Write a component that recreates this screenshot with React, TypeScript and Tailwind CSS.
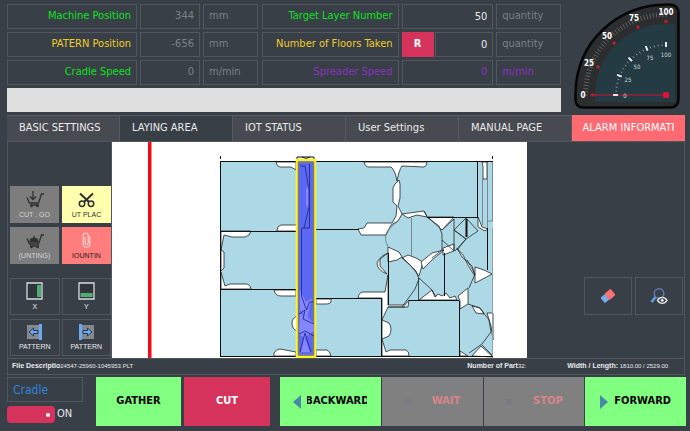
import { useState } from 'react';
import type { ReactNode } from 'react';

const tabs = ['BASIC SETTINGS', 'LAYING AREA', 'IOT STATUS', 'User Settings', 'MANUAL PAGE'];

const positions = [
  { label: 'Machine Position', value: '344', unit: 'mm', tone: 'text-[#0be31c]' },
  { label: 'PATERN Position', value: '-656', unit: 'mm', tone: 'text-[#f0cc28]' },
  { label: 'Cradle Speed', value: '0', unit: 'm/min', tone: 'text-[#0be31c]' }
];

const cell = 'flex items-center min-w-0 h-[25px] border border-[#52565d] px-[5px] whitespace-nowrap';

export default function App() {
  const [tab, setTab] = useState('LAYING AREA');

  return (
    <div className="min-h-screen bg-[#393f47] pl-[7px] pr-1 pt-1 font-['DejaVu_Sans_Condensed','DejaVu_Sans',sans-serif] text-[11px] text-[#e8eaec] flex flex-col">
      <header className="flex">
        <div className="flex-[554] min-w-0">
          <div className="grid grid-cols-[251fr_299fr] gap-1">
            <div className="grid gap-[3px]">
              {positions.map((row) => (
                <div key={row.label} className="grid grid-cols-[130fr_60fr_55fr] gap-[3px]">
                  <span className={`${cell} justify-end ${row.tone}`}>{row.label}</span>
                  <output className={`${cell} justify-end text-[#7d8187]`}>{row.value}</output>
                  <span className={`${cell} text-[#7d8187]`}>{row.unit}</span>
                </div>
              ))}
            </div>
            <div className="grid gap-[3px]">
              <div className="grid grid-cols-[137fr_92fr_65fr] gap-[3px]">
                <label htmlFor="target" className={`${cell} justify-end text-[#0be31c]`}>Target Layer Number</label>
                <input id="target" defaultValue="50" className={`${cell} w-full bg-transparent text-right`} />
                <span className={`${cell} text-[#7d8187]`}>quantity</span>
              </div>
              <div className="grid grid-cols-[137fr_92fr_65fr] gap-[3px]">
                <label htmlFor="taken" className={`${cell} justify-end text-[#f0cc28]`}>Number of Floors Taken</label>
                <div className="flex gap-px">
                  <button className="w-8 shrink-0 bg-[#d6335c] font-bold text-white">R</button>
                  <input id="taken" defaultValue="0" className={`${cell} w-full bg-transparent text-right`} />
                </div>
                <span className={`${cell} text-[#7d8187]`}>quantity</span>
              </div>
              <div className="grid grid-cols-[137fr_92fr_65fr] gap-[3px]">
                <span className={`${cell} justify-end text-[#8d2fc0]`}>Spreader Speed</span>
                <output className={`${cell} justify-end text-[#8d2fc0]`}>0</output>
                <span className={`${cell} text-[#8d2fc0]`}>m/min</span>
              </div>
            </div>
          </div>
          <div className="mt-[3px] h-6 bg-[#dfdfdf]" />
        </div>
        <div className="w-[125px] shrink-0 flex items-start justify-end pr-[5px]">
          <Gauge />
        </div>
      </header>

      <nav className="mt-[3px] grid grid-cols-6 h-[26px] mr-px">
        {tabs.map((name) => (
          <button
            key={name}
            onClick={() => setTab(name)}
            className={`border-r border-t border-[#555960] pl-3 text-left whitespace-nowrap overflow-hidden ${tab === name ? 'bg-[#393f47]' : 'bg-[#474a51]'}`}
          >
            {name}
          </button>
        ))}
        <button className="flex justify-center items-center bg-[#ff6a72] text-white whitespace-nowrap">ALARM INFORMATI</button>
      </nav>

      <main className="flex border-x border-t border-[#52565d] mr-px">
        <aside className="w-[104px] shrink-0 pt-11 pl-[2px] border-r border-[#52565d]">
          <div className="grid grid-cols-2 gap-x-[3px] gap-y-1">
            <ToolButton label="CUT . GO" tone="bg-[#7d7d7d] text-[#d5d5d5]"><CartIcon kind="down" /></ToolButton>
            <ToolButton label="UT PLAC" tone="bg-[#ffffae] text-[#333333]"><ScissorsIcon /></ToolButton>
            <ToolButton label="(UNTING)" tone="bg-[#7d7d7d] text-[#d5d5d5]"><CartIcon kind="up" /></ToolButton>
            <ToolButton label="IOUNTIN" tone="bg-[#ff7d7d] text-[#222222]"><ClipIcon /></ToolButton>
          </div>
          <div className="mt-[14px] grid grid-cols-2 gap-x-[2px] gap-y-1">
            <ToolButton label="X" tone="border border-[#52565d]">
              <svg width="17" height="18" viewBox="0 0 17 18"><path d="M1 1h15v16H1z" fill="#30353b" stroke="#d8dcdf" strokeWidth="1.3" /><path d="M11 3h4v12h-4z" fill="#4cae73" /></svg>
            </ToolButton>
            <ToolButton label="Y" tone="border border-[#52565d]">
              <svg width="17" height="18" viewBox="0 0 17 18"><path d="M1 1h15v16H1z" fill="#30353b" stroke="#d8dcdf" strokeWidth="1.3" /><path d="M2.5 11h12v4h-12z" fill="#4cae73" /></svg>
            </ToolButton>
            <ToolButton label="PATTERN" tone="border border-[#52565d]"><PatternIcon dir="left" /></ToolButton>
            <ToolButton label="PATTERN" tone="border border-[#52565d]"><PatternIcon dir="right" /></ToolButton>
          </div>
        </aside>
        <section className="flex-[415] min-w-0 bg-white">
          <MarkerPlan />
        </section>
        <aside className="flex-[157] min-w-0 flex flex-col">
          <div className="mt-[135px] ml-auto mr-px flex gap-[3px]">
            <button aria-label="Erase" className="w-12 h-[38px] flex items-center justify-center border border-[#52565d]">
              <svg width="14" height="14" viewBox="0 0 14 14">
                <g transform="rotate(-40 7 7)"><rect x="0" y="3.5" width="6" height="7" rx="1.2" fill="#73aef0" /><rect x="5.5" y="3" width="8" height="8" rx="1" fill="#fa7077" /></g>
              </svg>
            </button>
            <button aria-label="Preview" className="w-12 h-[38px] flex items-center justify-center border border-[#52565d]">
              <svg width="18" height="18" viewBox="0 0 18 18" fill="none">
                <circle cx="9" cy="6.5" r="4.8" stroke="#6178b8" strokeWidth="1.5" />
                <path d="M5.5 10 1.5 15" stroke="#64a0e6" strokeWidth="2.4" />
                <path d="M7.5 13.3c2.5-4 7-4 9.5 0-2.5 4-7 4-9.5 0z" fill="#393f47" stroke="#e5e5df" strokeWidth="1.3" />
                <circle cx="12.2" cy="13.3" r="1.5" fill="#e5e5df" />
              </svg>
            </button>
          </div>
        </aside>
      </main>

      <div className="mr-px grid grid-cols-[456fr_100fr_117fr] h-[17px] items-center border border-[#52565d] pl-1 font-['Liberation_Sans',sans-serif] text-[6px] whitespace-nowrap">
        <span><b className="text-[7px]">File Descriptio</b>24547-25960-1045953.PLT</span>
        <span><b className="text-[7px]">Number of Part</b>32:</span>
        <span><b className="text-[7px]">Width / Length:</b> 1810.00 / 2529.00</span>
      </div>

      <footer className="mt-[2px] mb-1 grid grid-cols-[76fr_98fr_89fr_416fr] h-[49px]">
        <div className="flex flex-col justify-between">
          <span className="flex h-[25px] items-center border border-[#52565d] px-[5px] text-xs text-[#2d86dc]">Cradle</span>
          <label className="mb-[3px] flex items-center gap-[2px]">
            <input type="checkbox" role="switch" defaultChecked className="peer sr-only" />
            <span className="flex h-[17px] w-12 items-center rounded bg-[#9a3a53] px-[5px] peer-checked:justify-end peer-checked:bg-[#d6335c]">
              <span className="size-1 rounded-full bg-white" />
            </span>
            ON
          </label>
        </div>
        <button className="ml-[13px] bg-[#80ff80] font-bold text-black">GATHER</button>
        <button className="ml-[3px] bg-[#d6335c] font-bold text-white">CUT</button>
        <div className="ml-[10px] grid grid-cols-4 gap-px font-bold text-black">
          <button className="flex items-center justify-center gap-[6px] bg-[#80ff80]">
            <Arrow dir="left" />
            <span className="flex w-[60px] justify-center overflow-hidden"><span>BACKWARD</span></span>
          </button>
          <button className="flex items-center justify-center gap-5 bg-[#808080] text-[#d8868c]">
            <Square />WAIT
          </button>
          <button className="flex items-center justify-center gap-5 bg-[#808080] text-[#d8868c]">
            <Square />STOP
          </button>
          <button className="flex items-center justify-center gap-[6px] bg-[#80ff80]">
            <Arrow dir="right" />FORWARD
          </button>
        </div>
      </footer>
    </div>
  );
}

interface ToolButtonProps {
  label: string;
  tone: string;
  children: ReactNode;
}

function ToolButton({ label, tone, children }: ToolButtonProps) {
  return (
    <button className={`flex h-[37px] min-w-0 flex-col items-center justify-center gap-[2px] font-['Liberation_Sans',sans-serif] text-[7px] leading-[9px] whitespace-nowrap ${tone}`}>
      {children}
      <span>{label}</span>
    </button>
  );
}

function Arrow({ dir }: { dir: 'left' | 'right' }) {
  return (
    <svg width="8" height="14" viewBox="0 0 8 14">
      <path d={dir === 'left' ? 'M8 0v14L0 7z' : 'M0 0v14l8-7z'} fill="#458ba9" />
    </svg>
  );
}

function Square() {
  return (
    <svg width="8" height="8" viewBox="0 0 8 8">
      <path d="M1 1h6v6H1z" fill="#7b7b86" />
    </svg>
  );
}

function CartIcon({ kind }: { kind: 'down' | 'up' }) {
  return (
    <svg width="18" height="17" viewBox="0 0 18 17" fill="none" stroke="#303030" strokeWidth="1.3">
      <path d="M1 6.5 3.5 12h9L15.500 3H18M4 14h9" />
      <circle cx="5.5" cy="15" r="1.3" fill="#303030" stroke="none" />
      <circle cx="11.5" cy="15" r="1.3" fill="#303030" stroke="none" />
      {kind === 'down' ? <path d="M7 0v8M4 5.5l3 3 3-3" /> : <path d="M4 10l1-3h2l1-2 1 2h2l1 3zM6.500 8h3" fill="#303030" />}
    </svg>
  );
}

function ScissorsIcon() {
  return (
    <svg width="17" height="17" viewBox="0 0 17 17" fill="none" stroke="#303030" strokeWidth="1.5">
      <path d="M2 2.500 11 11M15 2.500 6 11" strokeWidth="2" />
      <circle cx="4" cy="12.8" r="2.7" />
      <circle cx="13" cy="12.8" r="2.7" />
    </svg>
  );
}

function ClipIcon() {
  return (
    <svg width="9" height="17" viewBox="0 0 9 17" fill="none" stroke="#f4d6d6" strokeWidth="1.1">
      <path d="M7.8 4.500V12a3.300 3.300 0 0 1-6.600 0V3.500a2.500 2.500 0 0 1 5 0V11a1.500 1.500 0 0 1-3 0V5" />
    </svg>
  );
}

function PatternIcon({ dir }: { dir: 'left' | 'right' }) {
  return (
    <svg width="17" height="16" viewBox="0 0 17 16">
      <g transform={dir === 'right' ? 'translate(3 0)' : undefined}>
        <path d="M1 1h12v14H1z" fill="#85898e" />
        <path d={dir === 'right' ? 'M-2 0h3v16h-3z' : 'M13 0h3v16h-3z'} fill="#69a8f2" />
        <path
          d={dir === 'right' ? 'M11 8 6.500 4v2.500H2v3h4.500V12z' : 'M3 8l4.500-4v2.500H12v3H7.500V12z'}
          fill="#69a8f2"
          stroke="#24395b"
          strokeWidth="1"
        />
      </g>
    </svg>
  );
}

const outerMarks = [
  { text: '0', x: 583, y: 98, deg: 0 },
  { text: '25', x: 589, y: 66, deg: 22.5 },
  { text: '50', x: 607, y: 39, deg: 45 },
  { text: '75', x: 634, y: 21, deg: 67.5 },
  { text: '100', x: 666, y: 15, deg: 90 }
];

const innerMarks = [
  { text: '0', x: 625, y: 98 },
  { text: '25', x: 628, y: 82 },
  { text: '50', x: 637, y: 69 },
  { text: '75', x: 650, y: 60 },
  { text: '100', x: 666, y: 57 }
];

function Gauge() {
  return (
    <svg viewBox="573 2 108 108" className="-mt-[2px] -mb-[2px] w-[108px]" role="img" aria-label="Speed gauge">
      <path d="M668 4.500Q678.500 4.500 678.500 13V99Q678.500 107.500 670 107.500H583Q575.500 107.500 575.500 99V94C576 42 617 4.500 668 4.500Z" fill="#2b2d2e" stroke="#050607" strokeWidth="2.5" />
      <path d="M595 102V95A71 71 0 0 1 666 24H673Q675 24 675 26V102Z" fill="#243b43" />
      {Array.from({ length: 41 }, (_, i) => (
        <path key={i} d="M583 95h5" transform={`rotate(${i * 2.25} 666 95)`} stroke="#6d6f70" strokeWidth=".7" />
      ))}
      {Array.from({ length: 21 }, (_, i) => (
        <path key={i} d="M615 95h2" transform={`rotate(${i * 4.5} 666 95)`} stroke="#8fa0a5" strokeWidth=".8" />
      ))}
      {outerMarks.map((m) => (
        <g key={m.text}>
          <g transform={`rotate(${m.deg} 666 95)`}>
            <path d="M591 93.500h3v3h-3z" fill="#b32030" />
            <path d="M613 95h5" stroke="#ffffff" strokeWidth="1.8" />
          </g>
          <text x={m.x} y={m.y} textAnchor="middle" fontSize="8" fontWeight="bold" fill="#ffffff">{m.text}</text>
        </g>
      ))}
      <path d="M591 95h75" stroke="#cc1730" strokeWidth="1.2" />
      {innerMarks.map((m) => (
        <text key={m.text} x={m.x} y={m.y} textAnchor="middle" fontSize="6" fill="#d3dadd">{m.text}</text>
      ))}
      <path d="M613 95h5" stroke="#ffffff" strokeWidth="1.5" />
      <rect x="663" y="92" width="6" height="6" rx="1.5" fill="#d91436" />
    </svg>
  );
}

// gaps between the fabric pieces
const gaps = [
  'M276 162Q277 167 280 167H291L296 170V162Z',
  'M277 230Q277 226 281 225H297V231H277Z',
  'M221 231H251Q250 236 245 237H232L224 235L221 250Z',
  'M221 250L224 252V268L221 271Z',
  'M221 272L225 286L230 284H246Q250 284 251 289H221Z',
  'M274 290Q275 296 281 296H296V290Z',
  'M297 316Q292 318 292 323Q292 329 297 331Z',
  'M274 356V353Q276 349 280 349L296 352V356Z',
  'M316 299H331V302Q330 304 327 304H316Z',
  'M316 350H327Q330 351 331 356H316Z',
  'M364 162Q365 167 369 167H391Q395 170 397 181Q399 170 402 166L424 167Q427 166 427 162Z',
  'M395 184L399 180L400 184V198L398 206L402 214L398 221L391 225L386 235L361 235L358 229L364 228L367 223L392 223L396 216L397 206L393 202V188Z',
  'M402 214L424 211L427 217L417 215L408 218Z',
  'M428 217H454L442 230Z',
  'M478 217L482 227L488 229L485 231L478 227Z',
  'M443 248L454 244L454 251L443 255Z',
  'M482 162H487V179H483V167Z',
  'M388 253Q380 256 377 263Q377 270 387 274L380 266V259Z',
  'M388 247L399 252L402 257L397 260L388 262Z',
  'M402 258L408 255L416 258L423 262L419 276L411 266Z',
  'M421 262L432 253L444 250L432 260L423 269Z',
  'M457 248L463 255L469 267L475 276L472 266L462 257Z',
  'M475 267L484 270L492 274L481 280L475 283Z',
  'M419 300L432 290L435 297L438 294L442 296L446 293L450 298L455 296L457 300Z',
  'M460 301L458 296L468 288V304L460 309Z',
  'M472 306L480 308L484 314L476 313Z',
  'M487 313H493V340L491 326Z',
  'M472 356L481 346L493 357Z',
  'M358 298Q359 292 363 292H385L388 275V305L405 305L409 300L408 307H388L382 320V298Z',
  'M382 320L389 323Q393 329 389 336L382 339Z',
  'M382 339L386 352L390 350H406Q409 351 409 356H382Z',
  'M460 351L468 356H460Z'
];

function MarkerPlan() {
  return (
    <svg viewBox="112 142 415 216" className="block w-full" role="img" aria-label="Laying plan">
      <path d="M148 142h3.500v216H148z" fill="#f00d14" />
      <path d="M220 161h273v196H220z" fill="#add8e6" />
      {gaps.map((d) => (
        <path key={d} d={d} fill="#ffffff" stroke="#20262a" strokeWidth=".8" />
      ))}
      <g fill="none" stroke="#111111" strokeWidth="1">
        <path d="M220.500 156v3M492.500 156v3M297 159v-2h17v2M302 157q4 3 8 0" />
        <path d="M220 161.500h273M220 356.500h273M220.500 161v196" />
        <path d="M220 231.500h77M220 289.500h77M316 229.500h43M316 298.500h66M381.500 298v58" />
        <path d="M427 217.500h50M477.500 162v56" />
        <path d="M388.500 253v52M409 300.500h50M459.500 301v56M444.500 253v43M487.500 228v42" />
      </g>
      <g fill="none" stroke="#25292c" strokeWidth=".8">
        <path d="M482.500 178v47M487.500 162v66M487.500 221h5v-59M388 247q-6-12 2-19l8-7M411.500 218v38" stroke="#66757b" />
        <path d="M424 211l4 7 11 8 3 8v16l-10 8M402 257l14 14 3 8-4 10-13 18" />
        <path d="M418.500 278v22M419 278l13 12 4 7M467 260l8 14-6 14M468 304l12 4 9 12 2 12-9 12-13 9M482 345l11 11M492.500 325v10" />
        <path d="M405 307h-17M442 230l12-11v32l-12-11M454 230l12-12 12 13-12 8zM454 230l12 9-11 12M466 239l-9 11" />
      </g>
      <path d="M466.500 219v18" stroke="#111111" strokeWidth="2" />
      <path d="M492.500 228v128" stroke="#8da4ad" />
      <path d="M297 160h18v197h-18z" fill="#5b68f3" stroke="#fbf719" strokeWidth="2.5" />
      <path d="M298.500 162.500h15v192h-15z" fill="none" stroke="#7d7787" strokeWidth="1.5" />
      <path d="M309 185l-3 4v16l3 4zM300 290l6 12 6-4-5 20-7-8zM300 314l7 2 7 8v7l-10 7-5-4zM304 336l6 16h-9z" fill="#8585ff" />
      <path d="M300 166h5l4 24v17l-5 21M309.500 164v64h-8v68l5 14 3-8h4M299 314l6-4-2 9 11 5M299 334l6-3 9 5M305 333l-5 19M305 333l6 19" fill="none" stroke="#252b92" strokeWidth=".9" />
    </svg>
  );
}
